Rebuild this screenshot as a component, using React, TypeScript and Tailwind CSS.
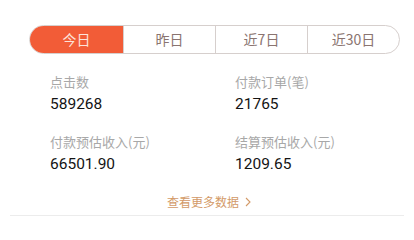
import React from 'react';

const tabs = ['今日', '昨日', '近7日', '近30日'];

const stats = [
  { label: '点击数', value: '589268' },
  { label: '付款订单(笔)', value: '21765' },
  { label: '付款预估收入(元)', value: '66501.90' },
  { label: '结算预估收入(元)', value: '1209.65' },
];

export default function App() {
  return (
    <div
      className="w-[414px] h-[222px] overflow-hidden bg-white"
      style={{ fontFamily: '"Noto Sans CJK SC", Roboto, sans-serif' }}
    >
      <div className="mx-[10px] h-[216px] border-b border-[#ececec] bg-white pt-[25px]">
        {/* Period tabs */}
        <div className="ml-[19px] flex h-[29px] w-[371px] overflow-hidden rounded-full border border-[#d6cfcd]">
          {tabs.map((t, i) => (
            <div
              key={t}
              className={
                i === 0
                  ? 'flex w-[93px] items-center justify-center bg-[#f25c37] text-[14px] text-[#fde3da]'
                  : 'flex flex-1 items-center justify-center border-l border-[#d6cfcd] text-[14px] text-[#8a7470]'
              }
            >
              {t}
            </div>
          ))}
        </div>

        {/* Stats grid */}
        <div className="mt-[19px] grid grid-cols-[185px_1fr] gap-y-[19px] pl-[40px]">
          {stats.map(s => (
            <div key={s.label} className="flex flex-col">
              <span className="text-[13px] leading-[18px] text-[#a8a8a8]">{s.label}</span>
              <span
                className="mt-[3px] text-[15.5px] leading-[20px] text-[#141414]"
                style={{ fontFamily: 'Roboto, "Noto Sans CJK SC", sans-serif' }}
              >
                {s.value}
              </span>
            </div>
          ))}
        </div>

        {/* More link */}
        <div className="mt-[19px] flex items-center justify-center gap-[6px] pl-[4px] text-[12px] text-[#d39a68]">
          <span>查看更多数据</span>
          <svg width="6" height="10" viewBox="0 0 6 10" fill="none">
            <path d="M1 1l4 4-4 4" stroke="#d39a68" strokeWidth="1.1" />
          </svg>
        </div>
      </div>
    </div>
  );
}
